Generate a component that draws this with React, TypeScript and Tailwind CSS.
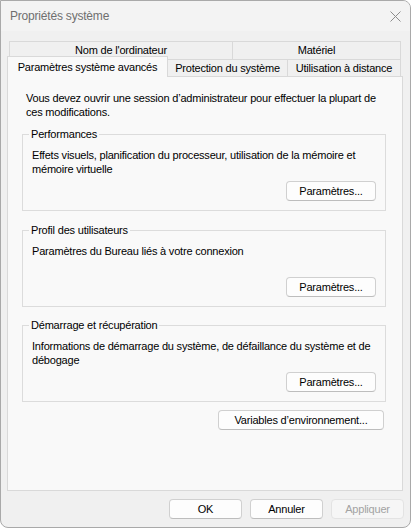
import type { ReactNode } from 'react'

function Btn({ children, className = '', disabled = false }: { children: ReactNode; className?: string; disabled?: boolean }) {
  return (
    <button
      type="button"
      className={
        'flex h-[20px] items-center justify-center rounded-[4px] border text-[11px] leading-none tracking-[-0.2px] ' +
        (disabled
          ? 'border-[#e3e3e3] bg-[#f6f6f6] text-[#a3a3a3]'
          : 'border-[#d0d0d0] border-b-[#bdbdbd] bg-[#fdfdfd] text-black') +
        ' ' +
        className
      }
    >
      {children}
    </button>
  )
}

function Group({ title, children, className = '' }: { title: string; children: ReactNode; className?: string }) {
  return (
    <fieldset className={'ml-[14px] w-[364px] border border-[#dcdcdc] px-[9px] pb-[9px] pt-[7px] ' + className}>
      <legend className="ml-[-3px] px-[2px] leading-[14px]">{title}</legend>
      <p className="h-[28px] leading-[14px]">{children}</p>
      <div className="mt-[5px] flex justify-end">
        <Btn className="w-[90px]">Paramètres...</Btn>
      </div>
    </fieldset>
  )
}

export default function App() {
  return (
    <div className="h-[529px] w-[412px] bg-white font-['Liberation_Sans',Arial,sans-serif] text-[11px] tracking-[-0.2px] text-black">
      <div className="flex h-[528px] w-[411px] flex-col overflow-hidden rounded-tr-[8px] rounded-b-[8px] border border-[#a9a9a9] bg-[#f0f0f0]">
        {/* title bar */}
        <div className="flex h-[30px] shrink-0 items-center justify-between bg-[#f3f3f3] pl-[9px] pr-[9px]">
          <span className="text-[12px] tracking-[-0.2px] text-[#6f6f6f]">Propriétés système</span>
          <svg width="11" height="11" viewBox="0 0 11 11" className="mt-[1px]">
            <path d="M0.5 0.5 L10.5 10.5 M10.5 0.5 L0.5 10.5" stroke="#8c8c8c" strokeWidth="1" fill="none" />
          </svg>
        </div>

        <div className="pt-[10px]">
          {/* back tab row */}
          <div className="ml-[8px] flex h-[18px]">
            <div className="w-[224px] border-l border-r border-t border-[#d9d9d9] bg-[#f0f0f0] pt-[1px] text-center leading-[14px]">
              Nom de l'ordinateur
            </div>
            <div className="w-[168px] border-r border-t border-[#d9d9d9] bg-[#f0f0f0] pt-[1px] text-center leading-[14px]">
              Matériel
            </div>
          </div>

          {/* front tab row */}
          <div className="relative z-10 mb-[-1px] ml-[6px] mt-[-3px] flex h-[21px] items-end">
            <div className="h-[21px] w-[161px] border-l border-r border-t border-[#d9d9d9] bg-[#f9f9f9] pt-[3px] text-center leading-[14px]">
              Paramètres système avancés
            </div>
            <div className="mb-[1px] h-[17px] w-[120px] border-r border-t border-[#d9d9d9] bg-[#f0f0f0] pt-[1px] text-center leading-[14px]">
              Protection du système
            </div>
            <div className="mb-[1px] h-[17px] w-[113px] border-r border-t border-[#d9d9d9] bg-[#f0f0f0] pt-[1px] text-center leading-[14px]">
              Utilisation à distance
            </div>
          </div>

          {/* panel */}
          <div className="ml-[6px] h-[415px] w-[396px] border border-[#d9d9d9] bg-[#f9f9f9] pt-[14px]">
            <p className="pl-[18px] leading-[14px]">
              Vous devez ouvrir une session d’administrateur pour effectuer la plupart de
              <br />
              ces modifications.
            </p>

            <Group title="Performances" className="mt-[8px]">
              Effets visuels, planification du processeur, utilisation de la mémoire et
              <br />
              mémoire virtuelle
            </Group>

            <Group title="Profil des utilisateurs" className="mt-[12px]">
              Paramètres du Bureau liés à votre connexion
            </Group>

            <Group title="Démarrage et récupération" className="mt-[11px]">
              Informations de démarrage du système, de défaillance du système et de
              <br />
              débogage
            </Group>

            <div className="mr-[18px] mt-[8px] flex justify-end">
              <Btn className="w-[166px]">Variables d’environnement...</Btn>
            </div>
          </div>

          {/* dialog buttons */}
          <div className="mr-[6px] mt-[8px] flex justify-end gap-[8px]">
            <Btn className="w-[73px]">OK</Btn>
            <Btn className="w-[73px]">Annuler</Btn>
            <Btn className="w-[73px]" disabled>
              Appliquer
            </Btn>
          </div>
        </div>
      </div>
    </div>
  )
}
